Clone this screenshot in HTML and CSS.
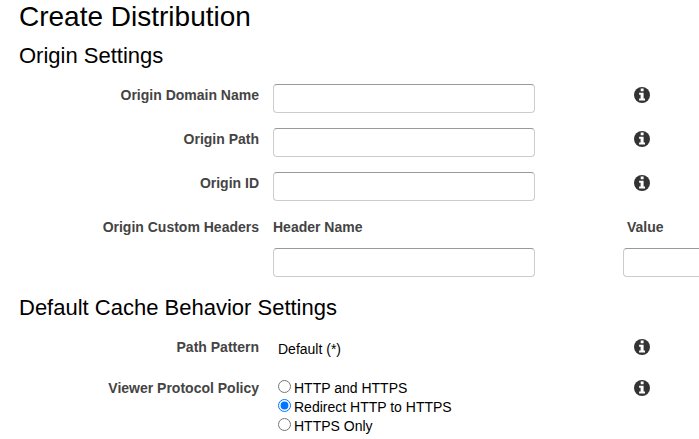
FILE: index.html
```html
<!DOCTYPE html>
<html lang="en">
<head>
<meta charset="utf-8">
<title>Create Distribution</title>
<link rel="stylesheet" href="styles.css">
</head>
<body>
<svg class="defs" width="0" height="0"><symbol id="info" viewBox="0 0 16 16"><circle cx="8" cy="8" r="8" fill="#333"/><path fill="#fff" d="M6.7 1.6h2.9v2.6H6.7zM5.1 5.8h4.5v5.8h1.4v2H5.1v-2h1.5V7.7H5.1z"/></symbol></svg>
<main class="page">
<h1>Create Distribution</h1>
<section>
<h2>Origin Settings</h2>
<div class="row"><label for="domain">Origin Domain Name</label><input class="text" id="domain" type="text"><svg class="info"><use href="#info"/></svg></div>
<div class="row"><label for="path">Origin Path</label><input class="text" id="path" type="text"><svg class="info"><use href="#info"/></svg></div>
<div class="row"><label for="oid">Origin ID</label><input class="text" id="oid" type="text"><svg class="info"><use href="#info"/></svg></div>
<div class="row headers"><span class="label">Origin Custom Headers</span>
<div class="col"><label for="hname">Header Name</label><input class="text" id="hname" type="text"></div>
<div class="col value"><label for="hvalue">Value</label><input class="text" id="hvalue" type="text"></div></div>
</section>
<section>
<h2 class="cache">Default Cache Behavior Settings</h2>
<div class="row pattern"><span class="label">Path Pattern</span><span class="static">Default (*)</span><svg class="info"><use href="#info"/></svg></div>
<div class="row protocol"><span class="label">Viewer Protocol Policy</span>
<div class="options">
<label><input type="radio" name="policy">HTTP and HTTPS</label>
<label><input type="radio" name="policy" checked>Redirect HTTP to HTTPS</label>
<label><input type="radio" name="policy">HTTPS Only</label>
</div><svg class="info"><use href="#info"/></svg></div>
</section>
</main>
</body>
</html>
```
FILE: styles.css
```css
* { box-sizing: border-box; }
body { margin: 0; background: #fff; color: #000; font: 14px/20px "Liberation Sans", Arial, sans-serif; }
.defs { display: block; }
.page { height: 439px; overflow: hidden; }
h1, h2 { margin: 0 0 0 19px; font-weight: 400; }
h1 { font-size: 28px; line-height: 34px; }
h2 { font-size: 22px; line-height: 26px; padding-top: 9px; height: 50px; }
.row { display: grid; grid-template-columns: 259px 262px 1fr; column-gap: 14px; height: 44px; align-items: start; }
.row > label, .label { color: #444; font-weight: 700; text-align: right; padding-top: 1px; }
.text { display: block; width: 262px; height: 29px; border: 1px solid #ccc; border-top-color: #999; border-radius: 4px; background: #fff; padding: 4px; }
.info { display: block; width: 16px; height: 16px; margin: 3px 0 0 85px; }
.headers { height: 78px; }
.col label { display: block; color: #444; font-weight: 700; height: 32px; padding-top: 1px; }
.value { margin-left: 74px; min-width: 0; }
.value label { padding-left: 4px; }
/* The second header field is open at the right, where the pane ends. */
.value .text { width: 100%; border-right: 0; border-radius: 4px 0 0 4px; }
.cache { height: 42px; padding-top: 1px; }
.pattern { height: 41px; }
.static { padding: 3px 0 0 5px; }
.options { padding: 1px 0 0 5px; }
.options label { display: flex; align-items: center; height: 19px; }
.options input { width: 13px; height: 13px; margin: 0 3px 3px 0; }
```
